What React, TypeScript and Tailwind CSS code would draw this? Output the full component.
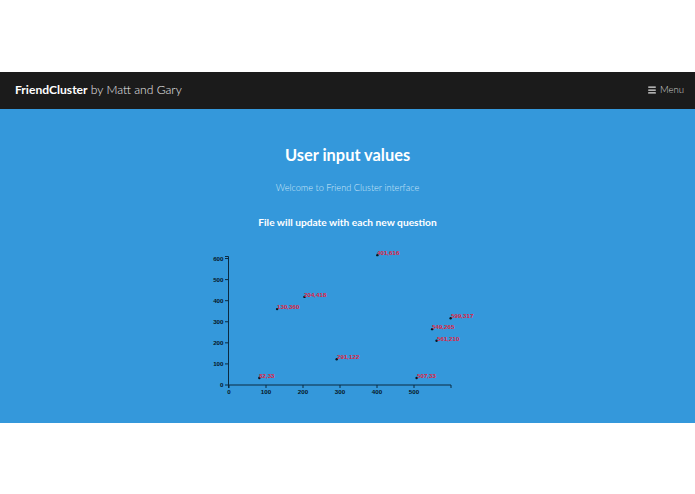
import React from 'react';
import { Menu } from 'lucide-react';

const points: [number, number][] = [
  [82, 33], [130, 360], [204, 418], [291, 122], [401, 616],
  [599, 317], [549, 265], [561, 210], [507, 33],
];

const sx = (v: number) => 29 + v * 0.37;
const sy = (v: number) => 135 - v * 0.2108;

const Chart: React.FC = () => (
  <svg width="295" height="150" viewBox="0 0 295 150" className="block overflow-visible" style={{ fontFamily: '"Liberation Sans", sans-serif' }}>
    <path d="M25 6.5H28.5V135H251V138" fill="none" stroke="#0b2a40" strokeWidth="1" />
    <path d="M28.5 135V138" fill="none" stroke="#0b2a40" strokeWidth="1" />
    {[0, 100, 200, 300, 400, 500].map((v) => (
      <g key={v}>
        <line x1={sx(v)} x2={sx(v)} y1={135} y2={138} stroke="#0b2a40" />
        <text x={sx(v)} y={144} textAnchor="middle" fontSize="6.2" fontWeight="700" fill="#06141f">{v}</text>
      </g>
    ))}
    {[0, 100, 200, 300, 400, 500, 600].map((v) => (
      <g key={v}>
        <line x1={25} x2={28.5} y1={sy(v)} y2={sy(v)} stroke="#0b2a40" />
        <text x={23.5} y={Math.round(sy(v) + 2.2)} textAnchor="end" fontSize="6.2" fontWeight="700" fill="#06141f">{v}</text>
      </g>
    ))}
    {points.map(([x, y]) => (
      <g key={x}>
        <circle cx={sx(x)} cy={sy(y)} r="1.2" fill="#06141f" />
        <text x={Math.round(sx(x))} y={Math.round(sy(y))} fontSize="6.2" fontWeight="700" fill="#e01f3d">{x},{y}</text>
      </g>
    ))}
  </svg>
);

const App: React.FC = () => {
  return (
    <div className="min-h-[494px] bg-white font-['Lato','Open_Sans',sans-serif]">
      <div className="h-[72px]" />
      <nav className="h-[37px] bg-[#1b1b1b] flex items-center justify-between pl-[15px] pr-[11px]">
        <div className="text-[12.1px] text-[#ececec] font-light">
          <span className="font-bold text-white">FriendCluster</span> by Matt and Gary
        </div>
        <div className="flex items-center gap-[3px] text-[9.6px] font-light text-[#d0d0d0]">
          <Menu size={10} strokeWidth={3} className="text-[#e0e0e0]" />
          <span>Menu</span>
        </div>
      </nav>
      <main className="h-[314px] bg-[#3498db] flex flex-col items-center">
        <h1 className="mt-[34px] text-[16.4px] leading-[24px] font-bold text-white">User input values</h1>
        <p className="mt-[14px] text-[9.2px] leading-[14px] font-light text-[#cfe7f8]">Welcome to Friend Cluster interface</p>
        <h2 className="mt-[19px] text-[10.2px] leading-[16px] font-bold text-white">File will update with each new question</h2>
        <div className="mt-[20px]">
          <Chart />
        </div>
      </main>
    </div>
  );
};

export default App;
